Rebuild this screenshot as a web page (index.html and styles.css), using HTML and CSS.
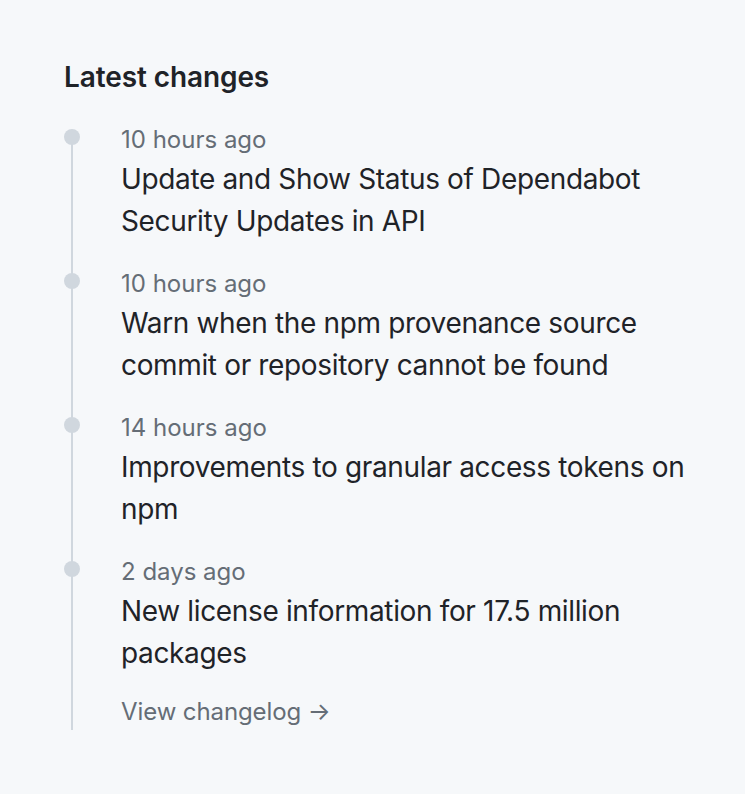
FILE: index.html
```html
<!DOCTYPE html>
<html lang="en">
<head>
<meta charset="utf-8">
<title>Latest changes</title>
<link rel="stylesheet" href="styles.css">
</head>
<body>
<section class="changes">
  <h2 class="changes-title">Latest changes</h2>
  <div class="timeline">
    <ul class="timeline-list">
      <li class="timeline-item">
        <div class="timeline-time">10 hours ago</div>
        <a class="timeline-link" href="#">Update and Show Status of Dependabot Security Updates in API</a>
      </li>
      <li class="timeline-item">
        <div class="timeline-time">10 hours ago</div>
        <a class="timeline-link" href="#">Warn when the npm provenance source commit or repository cannot be found</a>
      </li>
      <li class="timeline-item">
        <div class="timeline-time">14 hours ago</div>
        <a class="timeline-link" href="#">Improvements to granular access tokens on npm</a>
      </li>
      <li class="timeline-item">
        <div class="timeline-time">2 days ago</div>
        <a class="timeline-link" href="#">New license information for 17.5 million packages</a>
      </li>
    </ul>
    <a class="changelog-link" href="#">View changelog →</a>
  </div>
</section>
</body>
</html>
```

FILE: styles.css
```css
html, body {
  margin: 0;
  padding: 0;
  background: #f6f8fa;
}

body {
  font-family: Inter, "Noto Sans", "Liberation Sans", sans-serif;
  color: #1f2328;
}

.changes {
  padding: 56px 32px 40px 64px;
}

.changes-title {
  margin: 0 0 24px;
  font-size: 28px;
  line-height: 42px;
  font-weight: 600;
  letter-spacing: -0.1px;
}

.timeline {
  position: relative;
  padding-left: 57px;
}

.timeline::before {
  content: "";
  position: absolute;
  left: 7px;
  top: 12px;
  bottom: 0;
  width: 2px;
  background: #d0d7de;
}

.timeline-list {
  list-style: none;
  margin: 0;
  padding: 0;
}

.timeline-item {
  position: relative;
  margin-bottom: 24px;
}

.timeline-item::before {
  content: "";
  position: absolute;
  left: -57px;
  top: 7px;
  width: 16px;
  height: 16px;
  border-radius: 50%;
  background: #d0d7de;
}

.timeline-time {
  font-size: 24px;
  line-height: 36px;
  color: #656d76;
}

.timeline-link {
  display: block;
  font-size: 28px;
  line-height: 42px;
  letter-spacing: -0.35px;
  color: #1f2328;
  text-decoration: none;
}

.changelog-link {
  display: inline-block;
  margin-top: -4px;
  font-size: 24px;
  line-height: 36px;
  letter-spacing: -0.1px;
  color: #656d76;
  text-decoration: none;
}
```
